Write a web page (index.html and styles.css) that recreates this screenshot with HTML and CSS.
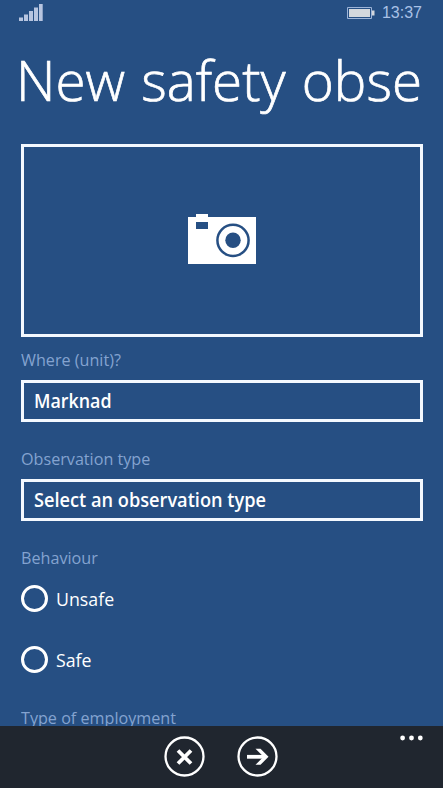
FILE: index.html
```
<!DOCTYPE html>
<html lang="en">
<head>
<meta charset="utf-8">
<title>New safety observation</title>
<link rel="stylesheet" href="styles.css">
</head>
<body>
<div class="phone">
  <header class="status">
    <svg class="signal" width="24" height="17" viewBox="0 0 24 17"><path d="M0 13.5h4V17H0zM5 10.5h4V17H5zM10 7h4v10h-4zM15 3.5h4V17h-4zM20 0h3.7v17H20z"/></svg>
    <div class="status-right">
      <svg width="29" height="13" viewBox="0 0 29 13"><path class="battery-frame" d="M1.5.5h24v11h-24z"/><path class="battery-fill" d="M3 2h21v8H3zM26 3.5h2.5v5H26z"/></svg>
      <span class="clock">13:37</span>
    </div>
  </header>
  <main class="content">
    <h1 class="title"><span class="title-text">New safety obse</span></h1>
    <button class="photo" aria-label="Add photo">
      <svg width="68" height="50" viewBox="0 0 68 50">
        <path class="white" d="M0 3h8V0h12v3h48v47H0z"/>
        <path class="blue" d="M8 8h12v7H8z"/>
        <circle class="lens" cx="45" cy="26.3" r="15.6"/>
        <circle class="blue" cx="45" cy="26.3" r="7.7"/>
      </svg>
    </button>
    <div class="label where">Where (unit)?</div>
    <div class="field"><span class="unit">Marknad</span></div>
    <div class="label type">Observation type</div>
    <div class="field"><span class="select">Select an observation type</span></div>
    <div class="label behaviour">Behaviour</div>
    <div class="option"><i class="radio"></i><span class="choice">Unsafe</span></div>
    <div class="option"><i class="radio"></i><span class="choice">Safe</span></div>
    <div class="label employment">Type of employment</div>
  </main>
  <footer class="appbar">
    <div class="actions">
      <svg width="41" height="41" viewBox="0 0 41 41"><circle class="ring" cx="20.5" cy="20.5" r="19"/><path class="glyph" d="M14 14.5l13 13M27 14.5l-13 13"/></svg>
      <svg width="41" height="41" viewBox="0 0 41 41"><circle class="ring" cx="20.5" cy="20.5" r="19"/><path class="glyph" d="M10 20.8h18"/><path class="white" d="M18.5 12.8h5l8 8-8 8h-5l8-8z"/></svg>
    </div>
    <svg class="more" width="23" height="6" viewBox="0 0 23 6"><circle cx="2.6" cy="3" r="2.4"/><circle cx="11.5" cy="3" r="2.4"/><circle cx="20.3" cy="3" r="2.4"/></svg>
  </footer>
</div>
</body>
</html>
```
FILE: styles.css
```
* { box-sizing: border-box; }
body { margin: 0; background: #264f83; font-family: "Open Sans", "Noto Sans", sans-serif; color: #fff; }
.phone { display: flex; flex-direction: column; height: 788px; overflow: hidden; }
.status { display: flex; flex: none; justify-content: space-between; height: 26px; padding: 4px 21px 0 19px; }
.signal { fill: #b7c5e0; }
.status-right { display: flex; gap: 7px; }
.status-right svg { margin-top: 3px; }
.battery-frame { fill: none; stroke: #9db4d8; }
.battery-fill { fill: #d3d7dc; }
.clock { font: 16px/18px "Liberation Sans", sans-serif; color: #a9c1e6; }
.content { flex: none; height: 699.5px; padding: 0 20px 0 21px; overflow: hidden; }
.title { margin: 0; height: 118px; padding-top: 15px; font-size: 56px; line-height: 76px; font-weight: 300; white-space: nowrap; }
.title-text { display: inline-block; margin-left: -5px; word-spacing: 2px; transform: scaleX(.977); transform-origin: left; -webkit-text-stroke: .7px #fff; }
.photo { display: flex; align-items: center; justify-content: center; width: 100%; height: 193px; padding: 0 1px 4px 0; border: 3px solid #f4f9ff; background: none; }
.white { fill: #fff; }
.blue { fill: #264f83; }
.lens { fill: none; stroke: #264f83; stroke-width: 2.5; }
.label { height: 24px; font-size: 17px; line-height: 24px; color: #84a3d0; white-space: nowrap; transform: scaleX(.95); transform-origin: left; }
.where { margin: 11px 0 8px; }
.type { margin: 25px 0 8px; }
.behaviour { margin: 25px 0 0; }
.field { display: flex; align-items: center; height: 42px; padding: 0 10px 1px; border: 3px solid #f4f9ff; font-size: 19px; line-height: 28px; font-weight: 600; white-space: nowrap; }
.unit { transform: scaleX(.94); transform-origin: left; }
.select { transform: scaleX(.957); transform-origin: left; }
.option { display: flex; align-items: center; gap: 8px; height: 61px; font-size: 18.5px; white-space: nowrap; }
.choice { transform: scaleX(.96); transform-origin: left; }
.behaviour + .option { margin-top: -2px; }
.radio { width: 27px; height: 27px; border: 3px solid #fff; border-radius: 50%; }
.employment { margin-top: 16px; }
.appbar { display: flex; position: relative; flex: 1; justify-content: center; background: #20262f; }
.actions { display: flex; gap: 32px; padding: 10px 2px 0 0; }
.ring { fill: none; stroke: #fff; stroke-width: 2.3; }
.glyph { fill: none; stroke: #fff; stroke-width: 3.8; }
.more { position: absolute; top: 9px; right: 20px; fill: #fff; }
```
